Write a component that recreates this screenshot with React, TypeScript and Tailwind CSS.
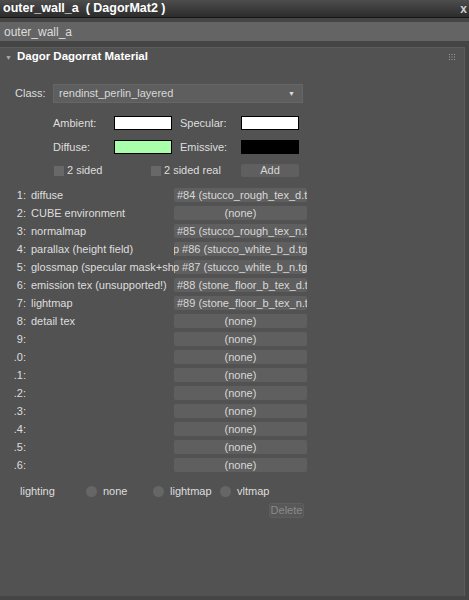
import React from 'react'

const maps: { n: string; label: string; value: string; align?: 'left' | 'center' }[] = [
  { n: '1:', label: 'diffuse', value: '#84 (stucco_rough_tex_d.tga)', align: 'left' },
  { n: '2:', label: 'CUBE environment', value: '(none)' },
  { n: '3:', label: 'normalmap', value: '#85 (stucco_rough_tex_n.tga)', align: 'left' },
  { n: '4:', label: 'parallax (height field)', value: 'Map #86 (stucco_white_b_d.tga)\u00a0\u00a0' },
  { n: '5:', label: 'glossmap (specular mask+shininess)', value: 'Map #87 (stucco_white_b_n.tga)\u00a0\u00a0' },
  { n: '6:', label: 'emission tex (unsupported!)', value: '#88 (stone_floor_b_tex_d.tga)', align: 'left' },
  { n: '7:', label: 'lightmap', value: '#89 (stone_floor_b_tex_n.tga)', align: 'left' },
  { n: '8:', label: 'detail tex', value: '(none)' },
  { n: '9:', label: '', value: '(none)' },
  { n: '.0:', label: '', value: '(none)' },
  { n: '.1:', label: '', value: '(none)' },
  { n: '.2:', label: '', value: '(none)' },
  { n: '.3:', label: '', value: '(none)' },
  { n: '.4:', label: '', value: '(none)' },
  { n: '.5:', label: '', value: '(none)' },
  { n: '.6:', label: '', value: '(none)' },
]

function Radio({ label, width }: { label: string; width: string }) {
  return (
    <div className={`flex items-center ${width}`}>
      <span className="w-[11px] h-[11px] rounded-full bg-[#666666] shrink-0" />
      <span className="ml-[6px]">{label}</span>
    </div>
  )
}

export default function App() {
  return (
    <div className="w-[469px] h-[600px] bg-[#454545] text-[11px] leading-none text-[#dedede] font-['Liberation_Sans',Arial,sans-serif] overflow-hidden flex flex-col">
      {/* title bar */}
      <div className="h-[18px] shrink-0 bg-gradient-to-b from-[#4d4d4d] to-[#2c2c2c] border-b border-[#161616] flex items-center justify-between pl-[3px] pr-[2px]">
        <span className="text-[12.5px] font-bold text-white">outer_wall_a&nbsp;&nbsp;( DagorMat2 )</span>
        <span className="text-[12px] font-bold text-[#cfcfcf]">x</span>
      </div>

      {/* name field */}
      <div className="mt-[4px] h-[19px] shrink-0 bg-[#646464] flex items-center px-[4px] text-[12px] text-[#dcdcdc]">
        outer_wall_a
      </div>

      {/* rollout */}
      <div className="mt-[6px] w-[465px] h-[549px] shrink-0 bg-[#525252] border-t border-r border-[#5c5c5c] flex flex-col">
        <div className="h-[16px] flex items-center justify-between pl-[5px] pr-[9px] mt-[1px]">
          <div className="flex items-center">
            <span className="text-[7px] text-[#a8a8a8]">▼</span>
            <span className="ml-[5px] font-bold text-white text-[11.5px]">Dagor Dagorrat Material</span>
          </div>
          <svg width="6" height="6" viewBox="0 0 6 6">
            {[0, 2.5, 5].map(y => [0, 2.5, 5].map(x => (
              <rect key={`${x}-${y}`} x={x} y={y} width="1" height="1" fill="#9a9a9a" />
            )))}
          </svg>
        </div>

        {/* class */}
        <div className="mt-[19px] flex items-center pl-[15px]">
          <span className="w-[38px]">Class:</span>
          <div className="w-[250px] h-[19px] bg-[#5e5e5e] border border-[#666666] flex items-center justify-between pl-[5px] pr-[7px]">
            <span className="text-[#d8d8d8]">rendinst_perlin_layered</span>
            <span className="text-[7px] text-[#dcdcdc]">▼</span>
          </div>
        </div>

        {/* colours */}
        <div className="mt-[13px] flex items-center pl-[53px] h-[14px]">
          <span className="w-[61px]">Ambient:</span>
          <span className="w-[58px] h-[14px] bg-white border border-black" />
          <span className="ml-[8px] w-[61px]">Specular:</span>
          <span className="w-[58px] h-[14px] bg-white border border-black" />
        </div>
        <div className="mt-[10px] flex items-center pl-[53px] h-[14px]">
          <span className="w-[61px]">Diffuse:</span>
          <span className="w-[58px] h-[14px] bg-[#a9ffa9] border border-black" />
          <span className="ml-[8px] w-[61px]">Emissive:</span>
          <span className="w-[58px] h-[14px] bg-black border border-black" />
        </div>

        {/* checkboxes */}
        <div className="mt-[10px] flex items-center pl-[54px] h-[13px]">
          <span className="w-[10px] h-[10px] bg-[#686868]" />
          <span className="ml-[3px] w-[84px]">2 sided</span>
          <span className="w-[10px] h-[10px] bg-[#686868]" />
          <span className="ml-[3px] w-[77px]">2 sided real</span>
          <div className="w-[58px] h-[13px] rounded-[2px] bg-[#5f5f5f] flex items-center justify-center text-[#d6d6d6]">Add</div>
        </div>

        {/* maps */}
        <div className="mt-[11px] flex flex-col gap-[4px]">
          {maps.map(m => (
            <div key={m.n} className="h-[14px] flex items-center">
              <div className="w-[174px] overflow-hidden whitespace-nowrap flex items-center">
                <span className="w-[26px] text-right shrink-0">{m.n}</span>
                <span className="ml-[5px]">{m.label}</span>
              </div>
              <div
                className={`w-[133px] h-[14px] rounded-[2px] bg-[#5f5f5f] overflow-hidden whitespace-nowrap flex items-center text-[#d8d8d8] ${
                  m.align === 'left' ? 'justify-start pl-[3px]' : 'justify-center'
                }`}
              >
                <span className="shrink-0">{m.value}</span>
              </div>
            </div>
          ))}
        </div>

        {/* lighting */}
        <div className="mt-[13px] flex items-center pl-[20px] h-[12px]">
          <span className="w-[66px]">lighting</span>
          <Radio label="none" width="w-[67px]" />
          <Radio label="lightmap" width="w-[67px]" />
          <Radio label="vltmap" width="w-[60px]" />
        </div>
        <div className="mt-[6px] pl-[269px]">
          <div className="w-[35px] h-[15px] rounded-[2px] bg-[#585858] border border-[#5e5e5e] flex items-center justify-center text-[#8a8a8a]">
            Delete
          </div>
        </div>
      </div>
    </div>
  )
}
